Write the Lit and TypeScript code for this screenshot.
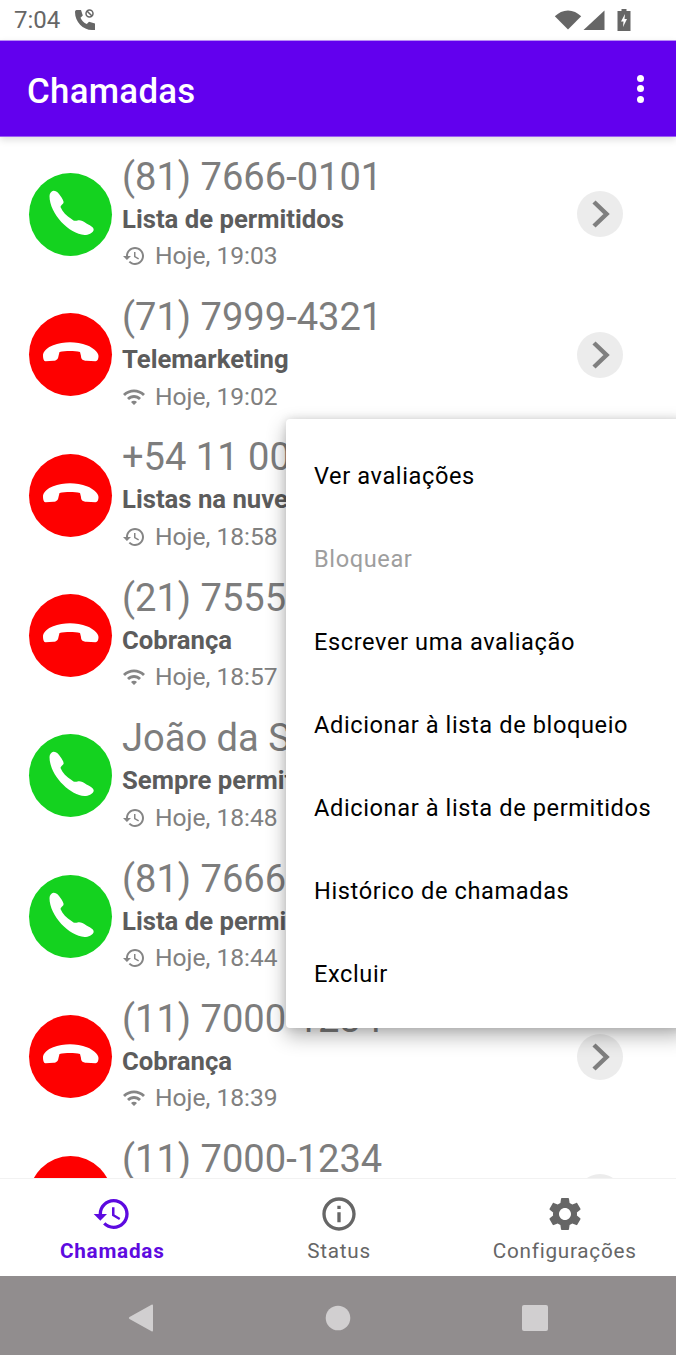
import { LitElement, html, css, svg } from "lit";
import { customElement } from "lit/decorators.js";

const CALL = "M25 27C25 24 27 22 29 21.700C32 21.500 34 24 36 27C38 30 39.500 32 39 34C38 35.500 36 36.500 36 38C38 43 42 47 47 50C49 52 51 52 53 51.500C56 50.800 58 52 62 54.500C67 57 70 59 69 61.500C68 64 64 66 60 66C45 65 25 45 25 27Z";
const END = "M18.500 47C18 42 24 38 28 36.500C34 34 40 33.300 45.500 33.300C51 33.300 57 34 63 36.500C68 38.500 74 43 74 47C74 50 73 52 71 52.300L62 51.800C58 51.500 56.500 50 56.500 47L55.500 43C50 41.800 41 41.800 35 43L34 47C33.500 50.500 32 51.500 29 51.800L21 52.300C19.500 52.300 18.500 50 18.500 47Z";
const HISTORY = "M13 3c-4.97 0-9 4.03-9 9H1l3.89 3.89.07.14L9 12H6c0-3.87 3.13-7 7-7s7 3.13 7 7-3.13 7-7 7c-1.93 0-3.68-.79-4.94-2.06l-1.42 1.42C8.27 19.99 10.51 21 13 21c4.97 0 9-4.03 9-9s-4.03-9-9-9zm-1 5v5l4.28 2.54.72-1.21-3.5-2.08V8H12z";
const WIFI = "M1 9l2 2c4.97-4.97 13.03-4.97 18 0l2-2C16.93 2.93 7.08 2.93 1 9zm8 8l3 3 3-3c-1.65-1.66-4.34-1.66-6 0zm-4-4l2 2c2.76-2.76 7.24-2.76 10 0l2-2C15.14 9.14 8.87 9.14 5 13z";
const INFO = "M11 7h2v2h-2zm0 4h2v6h-2zm1-9C6.48 2 2 6.48 2 12s4.48 10 10 10 10-4.48 10-10S17.52 2 12 2zm0 18c-4.41 0-8-3.59-8-8s3.59-8 8-8 8 3.59 8 8-3.59 8-8 8z";
const GEAR = "M19.14 12.94c.04-.3.06-.61.06-.94 0-.32-.02-.64-.07-.94l2.03-1.58c.18-.14.23-.41.12-.61l-1.92-3.32c-.12-.22-.37-.29-.59-.22l-2.39.96c-.5-.38-1.03-.7-1.62-.94l-.36-2.54c-.04-.24-.24-.41-.48-.41h-3.84c-.24 0-.43.17-.47.41l-.36 2.54c-.59.24-1.13.57-1.62.94l-2.39-.96c-.22-.08-.47 0-.59.22L2.74 8.87c-.12.21-.08.47.12.61l2.03 1.58c-.05.3-.09.63-.09.94s.02.64.07.94l-2.03 1.58c-.18.14-.23.41-.12.61l1.92 3.32c.12.22.37.29.59.22l2.39-.96c.5.38 1.03.7 1.62.94l.36 2.54c.05.24.24.41.48.41h3.84c.24 0 .44-.17.47-.41l.36-2.54c.59-.24 1.13-.56 1.62-.94l2.39.96c.22.08.47 0 .59-.22l1.92-3.32c.12-.22.07-.47-.12-.61l-2.01-1.58zM12 15.6c-1.98 0-3.6-1.62-3.6-3.6s1.62-3.6 3.6-3.6 3.6 1.62 3.6 3.6-1.62 3.6-3.6 3.6z";

type Row = { ok: boolean; num: string; label: string; src: "h" | "w"; time: string };
const ROWS: Row[] = [
  { ok: true, num: "(81) 7666-0101", label: "Lista de permitidos", src: "h", time: "Hoje, 19:03" },
  { ok: false, num: "(71) 7999-4321", label: "Telemarketing", src: "w", time: "Hoje, 19:02" },
  { ok: false, num: "+54 11 0000-0000", label: "Listas na nuvem", src: "h", time: "Hoje, 18:58" },
  { ok: false, num: "(21) 7555-0101", label: "Cobrança", src: "w", time: "Hoje, 18:57" },
  { ok: true, num: "João da Silva", label: "Sempre permitido", src: "h", time: "Hoje, 18:48" },
  { ok: true, num: "(81) 7666-0101", label: "Lista de permitidos", src: "h", time: "Hoje, 18:44" },
  { ok: false, num: "(11) 7000-1234", label: "Cobrança", src: "w", time: "Hoje, 18:39" },
  { ok: false, num: "(11) 7000-1234", label: "Cobrança", src: "w", time: "Hoje, 18:39" },
];
const MENU = ["Ver avaliações", "Bloquear", "Escrever uma avaliação", "Adicionar à lista de bloqueio", "Adicionar à lista de permitidos", "Histórico de chamadas", "Excluir"];

const icon = (d: string) => html`<svg viewBox="0 0 24 24" aria-hidden="true">${svg`<path d=${d}></path>`}</svg>`;
const phone = (d: string) => html`<svg viewBox="4.500 4 83 83" aria-hidden="true">${svg`<path d=${d}></path>`}</svg>`;

@customElement("app-root")
export class AppRoot extends LitElement {
  static styles = css`
    :host { display: flex; flex-direction: column; position: relative; width: 676px; height: 1355px; overflow: hidden; background: #fff; font-family: Roboto, "Liberation Sans", sans-serif; }
    .status { height: 40px; flex: none; display: flex; align-items: center; padding: 0 0 0 14px; color: #666; font-size: 24px; box-sizing: border-box; }
    .status .time { width: 59px; }
    .status .callic { width: 24px; height: 24px; fill: #666; }
    .status .right { margin-left: auto; display: flex; align-items: center; margin-right: 45px; }
    .wifi { width: 28px; height: 22px; fill: #666; }
    .sig { width: 22px; height: 22px; fill: #666; margin-left: 1px; margin-right: 12px; }
    .batt { width: 14px; height: 22px; }
    .bar { flex: none; height: 97px; box-sizing: border-box; background: #6200ee; border-top: 1px solid #b98cf5; border-bottom: 1px solid #9a5df2; display: flex; align-items: center; padding: 4px 27px 0; color: #fff; font-size: 34.8px; font-weight: 500; position: relative; z-index: 2; box-shadow: 0 3px 7px rgba(0,0,0,.13); letter-spacing: .3px; }
    .dots { margin-left: auto; margin-right: 5.5px; margin-top: -4px; display: flex; flex-direction: column; gap: 3.5px; }
    .dots i { width: 7px; height: 7px; border-radius: 50%; background: #fff; display: block; }
    .list { flex: 1; min-height: 0; overflow: hidden; padding-top: 7.2px; }
    .row { height: 140.4px; display: flex; align-items: center; padding-left: 29px; box-sizing: border-box; }
    .circle { width: 83px; height: 83px; border-radius: 50%; flex: none; }
    .circle.ok { background: #14d21f; }
    .circle.no { background: #fe0000; }
    .circle svg { fill: #fff; width: 83px; height: 83px; display: block; }
    .text { margin-left: 10px; width: 455px; min-width: 0; white-space: nowrap; }
    .num { font-size: 38.1px; font-weight: 400; line-height: 42px; color: #7d7d7d; height: 42px; margin-top: -1px; }
    .label { font-size: 25.7px; font-weight: 700; line-height: 42px; color: #5c5c5c; height: 42px; }
    .meta { display: flex; align-items: center; line-height: 32px; height: 32px; font-size: 24.6px; font-weight: 400; color: #808080; margin-top: 0.5px; }
    .meta svg { width: 24px; height: 24px; fill: #858585; margin-right: 9px; }
    .go { width: 46px; height: 46px; flex: none; border-radius: 50%; background: #ececec; }
    .go svg { width: 46px; height: 46px; display: block; fill: none; stroke: #7f7f7f; stroke-width: 4.5; }
    .nav { flex: none; height: 98px; box-sizing: border-box; background: #fff; border-top: 1px solid #f2f2f2; display: grid; grid-template-columns: 224.5px 229px 222.5px; position: relative; z-index: 2; }
    .tab { display: flex; flex-direction: column; align-items: center; padding-top: 15px; color: #666; font-size: 20.7px; letter-spacing: .75px; white-space: nowrap; }
    .tab svg { width: 40px; height: 40px; fill: #666; }
    .tab span { margin-top: 5px; line-height: 24px; }
    .tab.on { color: #5d0ae0; font-weight: 700; }
    .tab.on svg { fill: #5d0ae0; }
    .sys { flex: none; height: 79px; background: #918d8e; display: grid; grid-template-columns: repeat(3, 197px); align-items: center; justify-items: center; position: relative; z-index: 2; padding: 4px 42.5px 0; box-sizing: border-box; }
    .sys svg { fill: #d1cfd0; width: 30px; height: 30px; display: block; }
    .menu { position: absolute; z-index: 3; left: 286px; top: 419px; width: 400px; height: 609px; box-sizing: border-box; background: #fff; border-radius: 4px; padding: 15px 0 0; box-shadow: 0 8px 20px rgba(0,0,0,.3), 0 0 8px rgba(0,0,0,.12); }
    .item { height: 83.1px; display: flex; align-items: center; padding-left: 28px; font-size: 23.6px; letter-spacing: .6px; color: #000; white-space: nowrap; }
    .item.off { color: #9e9e9e; }
  `;

  render() {
    return html`
      <div class="status">
        <span class="time">7:04</span>
        <svg class="callic" viewBox="0 0 24 24">
          <path d="M3.500 2h4.500l1.800 5.500-2.300 2.200c1.300 3 3.300 5 6.300 6.300l2.200-2.300 6 1.800V22h-3C10 22 2 14 2 4c0-1 .5-2 1.500-2z"></path>
          <circle cx="16.500" cy="5.500" r="3.500" fill="none" stroke="#666" stroke-width="1.500"></circle>
          <path d="M14 3l5 5" stroke="#666" stroke-width="1.500"></path>
        </svg>
        <div class="right">
          <svg class="wifi" viewBox="0 0 28 22"><path d="M14 20.500L.8 7.300C4.500 3.900 9 1.600 14 1.600s9.500 2.300 13.200 5.700z"></path></svg>
          <svg class="sig" viewBox="0 0 22 22"><path d="M.500 21L21.500 1.500V21z"></path></svg>
          <svg class="batt" viewBox="0 0 14 22">
            <path d="M4.500 0h5v2H13.500v20H.500V2h4z" fill="#666"></path>
            <path d="M8 5L4 12.500h2.500L6 18l4-8H7.500z" fill="#fff"></path>
          </svg>
        </div>
      </div>
      <div class="bar">
        <span>Chamadas</span>
        <div class="dots"><i></i><i></i><i></i></div>
      </div>
      <div class="list">
        ${ROWS.map((r) => html`
          <div class="row">
            <div class="circle ${r.ok ? "ok" : "no"}">${phone(r.ok ? CALL : END)}</div>
            <div class="text">
              <div class="num">${r.num}</div>
              <div class="label">${r.label}</div>
              <div class="meta">${icon(r.src === "h" ? HISTORY : WIFI)}<span>${r.time}</span></div>
            </div>
            <div class="go"><svg viewBox="0 0 46 46"><path d="M17 11L29.500 23L17 35"></path></svg></div>
          </div>
        `)}
      </div>
      <div class="nav">
        <div class="tab on">${icon(HISTORY)}<span>Chamadas</span></div>
        <div class="tab">${icon(INFO)}<span>Status</span></div>
        <div class="tab">${icon(GEAR)}<span>Configurações</span></div>
      </div>
      <div class="sys">
        <svg viewBox="0 0 30 30"><path d="M27 2.500V27.500a1 1 0 0 1-1.500.8L3.500 16a1.200 1.200 0 0 1 0-2L25.500 1.700a1 1 0 0 1 1.500.8z"></path></svg>
        <svg viewBox="0 0 30 30"><circle cx="15" cy="15" r="12.300"></circle></svg>
        <svg viewBox="0 0 30 30"><rect x="2" y="2" width="26" height="26" rx="2"></rect></svg>
      </div>
      <div class="menu">
        ${MENU.map((m, i) => html`<div class="item ${i === 1 ? "off" : ""}">${m}</div>`)}
      </div>
    `;
  }
}
